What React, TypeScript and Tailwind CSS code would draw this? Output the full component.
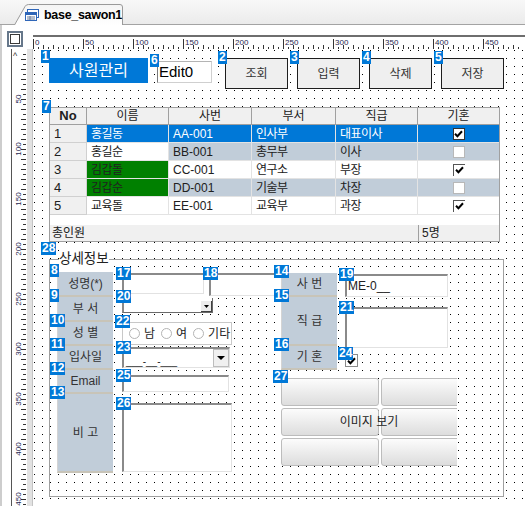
import React from 'react';

type Row = {
  no: string;
  name: string;
  id: string;
  dept: string;
  rank: string;
  married: boolean;
  sel?: boolean;
  alt?: boolean;
  green?: boolean;
};

const rows: Row[] = [
  { no: '1', name: '홍길동', id: 'AA-001', dept: '인사부', rank: '대표이사', married: true, sel: true },
  { no: '2', name: '홍길순', id: 'BB-001', dept: '총무부', rank: '이사', married: false, alt: true },
  { no: '3', name: '김갑돌', id: 'CC-001', dept: '연구소', rank: '부장', married: true, green: true },
  { no: '4', name: '김갑순', id: 'DD-001', dept: '기술부', rank: '차장', married: false, green: true, alt: true },
  { no: '5', name: '교육돌', id: 'EE-001', dept: '교육부', rank: '과장', married: true },
];

// 디자이너 화면에서 컴포넌트 왼쪽 위에 붙는 순번 배지
const Badge = ({ n }: { n: string }) => (
  <span className="absolute left-[-8px] top-[-8px] z-10 h-[13px] px-[1px] bg-[#0078d7] text-white text-[12px] leading-[13px] font-bold font-['Liberation_Sans',sans-serif]">
    {n}
  </span>
);

const Check = () => (
  <svg width="9" height="8" viewBox="0 0 9 8">
    <path d="M1 3.8 L3.4 6.2 L8 1.2" stroke="#000" strokeWidth="2" fill="none" />
  </svg>
);

const Arrow = ({ w = 7 }: { w?: number }) => (
  <svg width={w} height={Math.ceil(w / 2)} viewBox={`0 0 ${w} ${Math.ceil(w / 2)}`}>
    <path d={`M0 0 L${w} 0 L${w / 2} ${Math.ceil(w / 2)} Z`} fill="#000" />
  </svg>
);

const sunken =
  'border-t-2 border-l-2 border-r border-b border-t-[#8a8a8a] border-l-[#8a8a8a] border-r-[#e2e2e2] border-b-[#e2e2e2] bg-white';
const lbl =
  'relative shrink-0 flex items-center justify-center bg-[#c1cdd9] text-[12px] text-[#333] border-l border-l-[#d4d4d4] border-b-2 border-b-[#c8c4b8]';

function TabBar() {
  return (
    <div className="h-[25px] shrink-0 bg-gradient-to-b from-[#f8f8f8] to-[#ebebeb] border-b border-[#a3a3a3] flex items-end pl-[14px]">
      <div className="relative w-[110px] h-[21px] -mb-px">
        <svg className="absolute inset-0" width="110" height="21" viewBox="0 0 110 21">
          <defs>
            <linearGradient id="tabfill" x1="0" y1="0" x2="0" y2="1">
              <stop offset="0" stopColor="#f4f4f4" />
              <stop offset="1" stopColor="#ffffff" />
            </linearGradient>
          </defs>
          <path d="M0.5 21 L11 2.5 Q12 0.5 14.5 0.5 L106 0.5 Q108.5 0.5 108.5 3 L108.5 21" fill="url(#tabfill)" stroke="#9a9a9a" />
        </svg>
        <div className="relative flex items-center h-full pl-[11px] gap-[5px] pt-[1px]">
          <svg width="14" height="12" viewBox="0 0 14 12">
            <rect x="2.5" y="0.5" width="11" height="8" fill="#fff" stroke="#2f66b8" />
            <rect x="0.5" y="3.5" width="11" height="8" fill="#fff" stroke="#2f66b8" />
            <rect x="1" y="4" width="10" height="2" fill="#2f66b8" />
            <path d="M2 8 H10 M2 10 H10 M5 7 V11" stroke="#6b7c99" strokeWidth="1" />
          </svg>
          <span className="text-[12.5px] font-bold tracking-[-0.3px] text-black">base_sawon1</span>
        </div>
      </div>
    </div>
  );
}

function TopRuler() {
  const marks: React.ReactNode[] = [];
  for (let v = 0; v <= 490; v += 5) {
    const h = v % 50 === 0 ? 10 : v % 10 === 0 ? 4 : 2;
    marks.push(<line key={'t' + v} x1={v + 0.5} x2={v + 0.5} y1={12 - h} y2={12} stroke="#333" />);
    if (v % 50 === 0) {
      marks.push(
        <text key={'l' + v} x={v + 2} y={8} fontSize="8" fill="#262650" fontFamily="Liberation Sans, sans-serif">
          {v}
        </text>
      );
    }
  }
  return (
    <svg width="490" height="12" className="block">
      {marks}
    </svg>
  );
}

function LeftRuler() {
  const marks: React.ReactNode[] = [];
  for (let v = 5; v <= 460; v += 5) {
    const h = v % 10 === 0 ? 5 : 3;
    marks.push(<line key={'t' + v} x1={14 - h} x2={14} y1={v + 0.5} y2={v + 0.5} stroke="#333" />);
    if (v % 50 === 0) {
      marks.push(
        <text
          key={'l' + v}
          transform={`translate(9 ${v}) rotate(-90)`}
          textAnchor="middle"
          fontSize="8"
          fill="#262650"
          fontFamily="Liberation Sans, sans-serif"
        >
          {v}
        </text>
      );
    }
  }
  return (
    <svg width="15" height="460" className="block">
      <text x="1" y="10" fontSize="9" fill="#333" fontFamily="Liberation Sans, sans-serif">
        ^
      </text>
      {marks}
    </svg>
  );
}

function Dots() {
  return (
    <svg className="absolute inset-0 w-full h-full" aria-hidden>
      <defs>
        <pattern id="dots" width="8" height="8" patternUnits="userSpaceOnUse">
          <rect x="1" y="1" width="1" height="1" fill="#000" />
        </pattern>
      </defs>
      <rect width="100%" height="100%" fill="url(#dots)" />
    </svg>
  );
}

function GridBox({ r }: { r: Row }) {
  if (r.sel)
    return (
      <span className="w-[12px] h-[12px] bg-white border border-[#333] flex items-center justify-center">
        <Check />
      </span>
    );
  if (r.married)
    return (
      <span className="w-[12px] h-[12px] bg-white border-t border-l border-[#555] flex items-center justify-center">
        <Check />
      </span>
    );
  return <span className="w-[12px] h-[12px] bg-white border border-[#b8b8b8]" />;
}

function Grid() {
  const colW = ['w-[37px]', 'w-[82px]', 'w-[83px]', 'w-[84px]', 'w-[82px]', 'w-[81px]'];
  const heads = ['No', '이름', '사번', '부서', '직급', '기혼'];
  const cell = 'shrink-0 flex items-center pl-[4px] border-b border-[#e3e3e3] text-[12px] tracking-[-0.5px]';
  return (
    <div className="absolute left-[16px] top-[58px] w-[451px] h-[135px] border border-[#a0a0a0] bg-white flex flex-col">
      <Badge n="7" />
      <div className="flex h-[17px] shrink-0">
        {heads.map((h, i) => (
          <div
            key={h}
            className={`${colW[i]} shrink-0 flex items-center justify-center bg-[#f0f0f0] border-b border-[#a0a0a0] ${
              i < 5 ? 'border-r' : ''
            } ${i === 0 ? 'text-[13px] font-bold' : 'text-[12px]'}`}
          >
            {h}
          </div>
        ))}
      </div>
      {rows.map((r) => {
        const rest = r.sel ? 'bg-[#0078d7] text-white' : r.alt ? 'bg-[#c1cdd9]' : 'bg-white';
        const nameBg = r.sel ? 'bg-[#0078d7] text-white' : r.green ? 'bg-[#008000]' : 'bg-white';
        return (
          <div key={r.no} className="flex h-[18px] shrink-0">
            <div className="w-[37px] shrink-0 flex items-center pl-[4px] bg-[#f0f0f0] border-r border-b border-[#d0d0d0] text-[13px]">
              {r.no}
            </div>
            <div className={`w-[82px] border-r ${cell} ${nameBg}`}>{r.name}</div>
            <div className={`w-[83px] border-r ${cell} ${rest} tracking-normal`}>{r.id}</div>
            <div className={`w-[84px] border-r ${cell} ${rest}`}>{r.dept}</div>
            <div className={`w-[82px] border-r ${cell} ${rest}`}>{r.rank}</div>
            <div className={`w-[81px] shrink-0 flex items-center justify-center border-b border-[#e3e3e3] ${rest}`}>
              <GridBox r={r} />
            </div>
          </div>
        );
      })}
      <div className="flex-1" />
      <div className="flex h-[16px] shrink-0 bg-[#f0f0f0] text-[12px]">
        <div className="w-[368px] pl-[2px] flex items-center">총인원</div>
        <div className="flex-1 border-l border-[#a0a0a0] pl-[3px] flex items-center">5명</div>
      </div>
    </div>
  );
}

const leftLabels = [
  { n: '8', t: '성명(*)', h: 'h-[25px]' },
  { n: '9', t: '부 서', h: 'h-[25px]' },
  { n: '10', t: '성 별', h: 'h-[24px]' },
  { n: '11', t: '입사일', h: 'h-[24px]' },
  { n: '12', t: 'Email', h: 'h-[24px]' },
  { n: '13', t: '비 고', h: 'h-[79px]' },
];

const rightLabels = [
  { n: '14', t: '사 번', h: 'h-[24px]' },
  { n: '15', t: '직 급', h: 'h-[49px]' },
  { n: '16', t: '기 혼', h: 'h-[24px]' },
];

const topButtons = [
  { n: '2', t: '조회' },
  { n: '3', t: '입력' },
  { n: '4', t: '삭제' },
  { n: '5', t: '저장' },
];

function Canvas() {
  return (
    <div className="flex-1 relative overflow-hidden bg-white">
      <Dots />

      <div className="absolute left-[16px] top-[9px] w-[99px] h-[25px] bg-[#0078d7] text-white text-[16px] flex items-center justify-center">
        <Badge n="1" />
        사원관리
      </div>

      <div className="absolute left-[124px] top-[12px] w-[55px] h-[22px] bg-white border border-[#cfcfcf] border-l-[#7a7a7a] border-t-[#b4b4b4] flex items-center pl-[1px] text-[15px] text-black">
        <Badge n="6" />
        Edit0
      </div>

      <div className="absolute left-[192px] top-[9px] flex gap-[9px]">
        {topButtons.map((b) => (
          <div
            key={b.n}
            className="relative w-[63px] h-[31px] bg-[#efefef] border border-[#1e1e1e] flex items-center justify-center text-[12px] text-[#333]"
          >
            <Badge n={b.n} />
            {b.t}
          </div>
        ))}
      </div>

      <Grid />

      <div className="absolute left-[16px] top-[201px] w-[455px] h-[247px] pt-[9px]">
        <Badge n="28" />
        <div className="h-full border border-[#a0a0a0]" />
        <span className="absolute left-[10px] top-0 bg-white text-[13.5px] leading-[17px] text-[#222]">상세정보</span>
      </div>

      <div className="absolute left-[24px] top-[223px] w-[56px] flex flex-col">
        {leftLabels.map((l) => (
          <div key={l.n} className={`${l.h} ${lbl}`}>
            <Badge n={l.n} />
            {l.t}
          </div>
        ))}
      </div>

      <div className={`absolute left-[89px] top-[224px] w-[82px] h-[21px] ${sunken}`}>
        <Badge n="17" />
      </div>
      <div className={`absolute left-[176px] top-[224px] w-[81px] h-[23px] ${sunken}`}>
        <Badge n="18" />
      </div>

      <div className="absolute left-[89px] top-[249px] w-[91px] h-[15px] bg-white border-l-2 border-l-[#8a8a8a] border-b border-b-[#6a6a6a] border-r border-r-[#6a6a6a] flex justify-end items-end">
        <Badge n="20" />
        <span className="w-[11px] h-[11px] bg-[#ececec] border-r border-b border-[#404040] flex items-center justify-center">
          <Arrow w={5} />
        </span>
      </div>

      <div className="absolute left-[89px] top-[273px] w-[110px] h-[23px] bg-white border border-[#c8c8c8] flex items-center pl-[6px] gap-[6px] text-[12px] text-[#222]">
        <Badge n="22" />
        {['남', '여', '기타'].map((t) => (
          <span key={t} className="flex items-center gap-[4px]">
            <span className="w-[11px] h-[11px] rounded-full border border-[#b4b4b4] bg-white" />
            {t}
          </span>
        ))}
      </div>

      <div className={`absolute left-[89px] top-[298px] w-[108px] h-[21px] ${sunken} flex items-stretch`}>
        <Badge n="23" />
        <span className="flex-1 flex items-end pl-[2px] text-[10px] leading-[10px] text-[#222] overflow-hidden">___-__-___</span>
        <span className="w-[16px] bg-[#f0f0f0] border border-[#bdbdbd] flex items-center justify-center">
          <Arrow w={8} />
        </span>
      </div>

      <div className={`absolute left-[89px] top-[326px] w-[107px] h-[17px] ${sunken}`}>
        <Badge n="25" />
      </div>
      <div className={`absolute left-[89px] top-[354px] w-[110px] h-[69px] ${sunken}`}>
        <Badge n="26" />
      </div>

      <div className="absolute left-[248px] top-[224px] w-[56px] flex flex-col">
        {rightLabels.map((l) => (
          <div key={l.n} className={`${l.h} ${lbl}`}>
            <Badge n={l.n} />
            {l.t}
          </div>
        ))}
      </div>

      <div className={`absolute left-[312px] top-[225px] w-[103px] h-[23px] ${sunken} flex items-center pl-[1px] text-[12px] text-[#222]`}>
        <Badge n="19" />
        ME-0__
      </div>
      <div className={`absolute left-[312px] top-[258px] w-[103px] h-[41px] ${sunken}`}>
        <Badge n="21" />
      </div>
      <div className="absolute left-[312px] top-[305px] w-[13px] h-[13px] bg-white border border-[#8a8a8a] flex items-center justify-center">
        <Badge n="24" />
        <Check />
      </div>

      <div className="absolute left-[248px] top-[329px] w-[176px] h-[88px]">
        <Badge n="27" />
        <div className="w-full h-full overflow-hidden grid grid-cols-[98px_98px] grid-rows-[28px_28px_28px] gap-[2px]">
          {[0, 1, 2, 3, 4, 5].map((i) => (
            <div key={i} className="rounded-[3px] border border-[#bcbcbc] bg-gradient-to-b from-[#fcfcfc] to-[#dddddd]" />
          ))}
        </div>
        <span className="absolute inset-x-0 top-[30px] h-[28px] flex items-center justify-center text-[12px] text-[#222]">
          이미지 보기
        </span>
      </div>
    </div>
  );
}

export default function App() {
  return (
    <div className="w-[525px] h-[506px] overflow-hidden bg-white flex flex-col font-['Liberation_Sans','Noto_Sans_CJK_KR',sans-serif] text-[#202020]">
      <TabBar />
      <div className="flex-1 min-h-0 flex flex-col border-l-2 border-[#cdcdcd]">
        <div className="flex h-[24px] shrink-0">
          <div className="w-[31px] pl-[5px] pt-[6px]">
            <div className="w-[16px] h-[16px] border-2 border-[#66778a] bg-white p-[1px]">
              <div className="w-full h-full border border-[#3a3a3a]" />
            </div>
          </div>
          <div className="flex-1 mt-[10px] border-t-2 border-[#6e6e6e] overflow-hidden">
            <TopRuler />
          </div>
        </div>
        <div className="flex-1 min-h-0 flex">
          <div className="w-[9px] shrink-0" />
          <div className="w-[16px] shrink-0 border-l border-[#555] overflow-hidden">
            <LeftRuler />
          </div>
          <div className="w-[6px] shrink-0 bg-[#e2e2e2] border-r border-[#c4c4c4]" />
          <Canvas />
        </div>
      </div>
    </div>
  );
}
